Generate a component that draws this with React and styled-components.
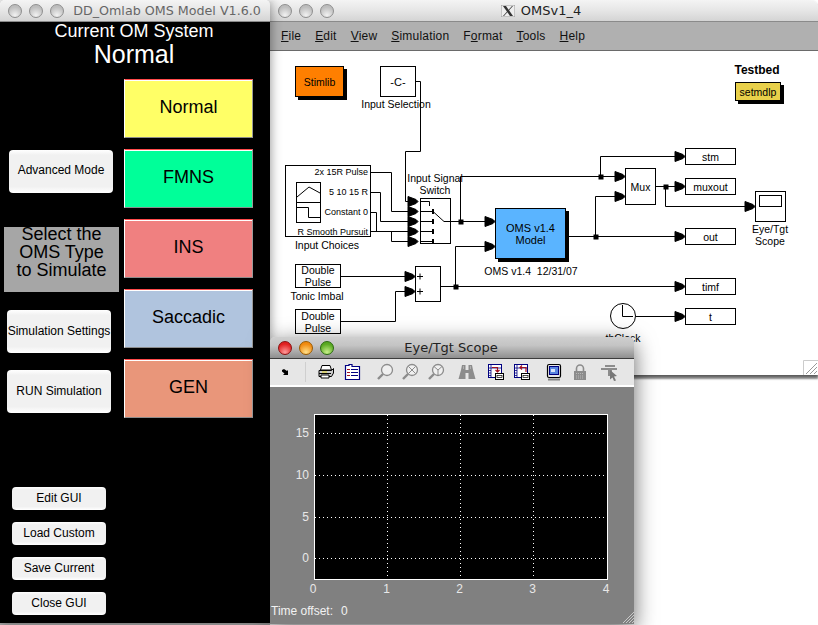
import React from "react";
import styled, { createGlobalStyle } from "styled-components";

const GlobalStyle = createGlobalStyle`
  html, body {
    margin: 0;
    padding: 0;
    background: #fff;
    font-family: "Liberation Sans", Arial, sans-serif;
  }
`;

const Desktop = styled.div`
  position: relative;
  width: 818px;
  height: 625px;
  overflow: hidden;
  background: #fff;
`;

const Window = styled.div`
  position: absolute;
  left: ${(p) => p.$x}px;
  top: ${(p) => p.$y}px;
  width: ${(p) => p.$w}px;
  height: ${(p) => p.$h}px;
  display: flex;
  flex-direction: column;
  box-shadow: ${(p) => p.$shadow};
  border-radius: ${(p) => p.$radius || "5px 5px 0 0"};
`;

const TitleBar = styled.div`
  height: 22px;
  flex: none;
  display: flex;
  align-items: center;
  padding-left: 8px;
  box-sizing: border-box;
  background: ${(p) =>
    p.$active
      ? "linear-gradient(#cfcfcf, #c4c4c4 40%, #8f8f8f)"
      : "linear-gradient(#f4f4f4, #e6e6e6 50%, #d4d4d4)"};
  border-bottom: 1px solid ${(p) => (p.$active ? "#3c3c3c" : "#8a8a8a")};
  border-radius: inherit;
`;

const Lights = styled.div`
  display: flex;
  gap: 7px;
  flex: none;
`;

const Light = styled.span`
  width: 14px;
  height: 14px;
  border-radius: 50%;
  box-sizing: border-box;
  border: 1px solid ${(p) => p.$edge};
  background: radial-gradient(circle at 50% 85%, ${(p) => p.$glow}, ${(p) => p.$base} 70%);
`;

const WindowTitle = styled.div`
  flex: 1;
  display: flex;
  justify-content: center;
  align-items: center;
  gap: 6px;
  padding-right: ${(p) => p.$pr || 0}px;
  font-family: "DejaVu Sans", sans-serif;
  font-size: ${(p) => p.$size || 13}px;
  color: ${(p) => p.$color || "#222"};
  white-space: nowrap;
`;

/* left GUI */
const GuiBody = styled.div`
  flex: 1;
  background: #000;
  display: flex;
  flex-direction: column;
`;

const Heading = styled.div`
  color: #fff;
  text-align: center;
  padding-right: 2px;
  font-size: ${(p) => p.$size}px;
  line-height: ${(p) => p.$lh}px;
  margin-top: ${(p) => p.$mt || 0}px;
`;

const GuiColumns = styled.div`
  display: flex;
  margin-top: 11px;
`;

const SideColumn = styled.div`
  width: 124px;
  display: flex;
  flex-direction: column;
  align-items: flex-start;
`;

const ModeColumn = styled.div`
  display: flex;
  flex-direction: column;
  gap: 11px;
`;

const ModeButton = styled.div`
  width: 129px;
  height: 59px;
  box-sizing: border-box;
  display: flex;
  align-items: center;
  justify-content: center;
  padding-bottom: 3px;
  background: ${(p) => p.$color};
  border-top: 1px solid #ff4a4a;
  border-left: 1px solid #fff;
  border-right: 1px solid #9a9a9a;
  border-bottom: 1px solid #8c8c8c;
  box-shadow: inset 0 1px 0 #fff;
  color: #000;
  font-size: 18px;
`;

const GuiButton = styled.div`
  width: ${(p) => p.$w}px;
  height: ${(p) => p.$h}px;
  margin-left: ${(p) => p.$ml}px;
  margin-top: ${(p) => p.$mt}px;
  flex: none;
  display: flex;
  align-items: center;
  justify-content: center;
  white-space: nowrap;
  padding-bottom: ${(p) => p.$pb || 1}px;
  box-sizing: border-box;
  border-radius: 4px;
  background: linear-gradient(#fff, #f1f1f1 12%, #f1f1f1 85%, #fff);
  color: #000;
  font-size: 12px;
`;

const SelectLabel = styled.div`
  width: 115px;
  height: 65px;
  margin: 34px 0 0 4px;
  flex: none;
  display: flow-root;
  background: #a6a6a6;
  color: #000;
  font-size: 18px;
  line-height: 18px;
  text-align: center;
`;

const SelectText = styled.div`
  margin-top: -2px;
  white-space: pre-line;
`;

/* model window */
const MenuBar = styled.div`
  height: 29px;
  flex: none;
  box-sizing: border-box;
  display: flex;
  align-items: center;
  gap: 14px;
  padding: 0 0 0 11px;
  background: #b0b0b0;
  border-bottom: 1px solid #6a6a6a;
  font-size: 12px;
  letter-spacing: 0.2px;
  color: #111;
`;

const Canvas = styled.div`
  position: relative;
  flex: 1;
  background: #fff;
  overflow: hidden;
`;

const Wires = styled.svg`
  position: absolute;
  left: 0;
  top: 0;
`;

// nodes are given in page coordinates, the canvas starts at 270,51
const Block = styled.div`
  position: absolute;
  left: ${(p) => p.$x - 270}px;
  top: ${(p) => p.$y - 51}px;
  width: ${(p) => p.$w}px;
  height: ${(p) => p.$h}px;
  box-sizing: border-box;
  display: flex;
  align-items: center;
  justify-content: center;
  text-align: center;
  background: ${(p) => p.$fill || "#fff"};
  border: 1px solid #000;
  box-shadow: ${(p) => (p.$shadow ? "3px 3px 0 #000" : "none")};
  color: #000;
  font-size: ${(p) => p.$size || 10.5}px;
  line-height: 12px;
  white-space: pre-line;
`;

const NodeLabel = styled.div`
  position: absolute;
  left: ${(p) => p.$cx - 270}px;
  top: ${(p) => p.$y - 51}px;
  transform: translateX(-50%);
  color: #000;
  font-size: ${(p) => p.$size || 10.5}px;
  line-height: 12px;
  font-weight: ${(p) => (p.$bold ? "bold" : "normal")};
  text-align: center;
  white-space: pre;
`;

const PortList = styled.div`
  position: absolute;
  right: 2px;
  top: -4px;
  display: flex;
  flex-direction: column;
  align-items: flex-end;
  font-size: 9px;
  line-height: 20px;
  white-space: nowrap;
`;

const MiniGraph = styled.svg`
  position: absolute;
  left: 10px;
  top: 16px;
`;

const Grip = styled.svg`
  position: absolute;
  right: ${(p) => p.$r}px;
  bottom: ${(p) => p.$b}px;
`;

/* scope window */
const Toolbar = styled.div`
  height: 28px;
  flex: none;
  box-sizing: border-box;
  display: flex;
  align-items: center;
  padding-left: 5px;
  background: #e6e6e6;
  border-bottom: 2px solid #fff;
`;

const ToolSlot = styled.div`
  width: 20px;
  height: 20px;
  flex: none;
  margin-left: ${(p) => p.$ml || 0}px;
  display: flex;
`;

const ToolSeparator = styled.div`
  width: 1px;
  height: 20px;
  flex: none;
  margin: 0 10px;
  background: #cfcfcf;
`;

const ScopeBody = styled.div`
  position: relative;
  flex: 1;
  display: flex;
  flex-direction: column;
  background: #808080;
`;

const Status = styled.div`
  height: 20px;
  padding: 4px 0 0 1px;
  display: flex;
  gap: 8px;
  color: #f2f2f2;
  font-size: 12px;
  line-height: 15px;
`;

const greyLight = { $edge: "#8e8e8e", $glow: "#f2f2f2", $base: "#bdbdbd" };

function GreyLights() {
  return (
    <Lights>
      <Light {...greyLight} />
      <Light {...greyLight} />
      <Light {...greyLight} />
    </Lights>
  );
}

function Arrow({ x, y }) {
  return <polygon points={`${x - 10},${y - 5} ${x - 2},${y - 2} ${x},${y} ${x - 2},${y + 2} ${x - 10},${y + 5}`} fill="#000" />;
}

function Junction({ x, y }) {
  return <rect x={x - 1.5} y={y - 1.5} width="4" height="4" fill="#000" />;
}

const wirePaths = [
  "M416 81.5H420.5V151.5H405.5V201.5H410",
  "M371 172.5H391.5V211.5H410",
  "M371 192.5H380.5V221.5H410",
  "M371 212.5H376.5V231.5H410",
  "M371 231.5H391.5V241.5H410",
  "M451 221.5H487",
  "M460.5 221.5V176.5H617",
  "M600.5 176.5V156.5H677",
  "M656 186.5H677",
  "M665.5 186.5V206.5H747",
  "M569 236.5H677",
  "M595.5 236.5V196.5H617",
  "M341 276.5H407",
  "M341 321.5H395.5V291.5H407",
  "M441 286.5H677",
  "M455.5 286.5V246.5H487",
  "M636 316.5H677",
];

const arrows = [
  [418, 201.5], [418, 211.5], [418, 221.5], [418, 231.5], [418, 241.5],
  [495, 221.5], [495, 246.5],
  [625, 176.5], [625, 196.5],
  [685, 156.5], [685, 186.5], [685, 236.5], [685, 286.5], [685, 316.5],
  [755, 206.5],
  [415, 276.5], [415, 291.5],
];

const junctions = [
  [460.5, 221.5], [600.5, 176.5], [665.5, 186.5], [595.5, 236.5], [455.5, 286.5],
];

function ModelWires() {
  return (
    <Wires width="548" height="324" viewBox="270 51 548 324" fill="none" stroke="#000">
      {wirePaths.map((d) => (
        <path key={d} d={d} />
      ))}
      {arrows.map(([x, y]) => (
        <Arrow key={`${x}-${y}`} x={x} y={y} />
      ))}
      {junctions.map(([x, y]) => (
        <Junction key={`${x}-${y}`} x={x} y={y} />
      ))}
      {/* switch block inside */}
      <path d="M420 201.5H429.5V206" />
      <path d="M420 211.5H433M420 221.5H433M420 231.5H433M420 241.5H433" />
      <path d="M433 211.5L444 221.5H451" />
      <g fill="#000" stroke="none">
        <rect x="432" y="209" width="2" height="5" />
        <rect x="432" y="219" width="2" height="5" />
        <rect x="432" y="229" width="2" height="5" />
        <rect x="432" y="239" width="2" height="5" />
      </g>
      {/* sum signs */}
      <path d="M417 276.5H423M420 273.5V279.5M417 291.5H423M420 288.5V294.5" />
      {/* clock */}
      <circle cx="623" cy="316" r="12.5" fill="#fff" />
      <path d="M622.5 305V316.5H633" />
      {/* scope */}
      <rect x="755.5" y="191.5" width="30" height="30" fill="#fff" />
      <rect x="759.5" y="195.5" width="22" height="11" fill="#fff" />
    </Wires>
  );
}

function ChoicesGraph() {
  return (
    <MiniGraph width="26" height="42" viewBox="0 0 26 42" fill="none" stroke="#000">
      <rect x="0.5" y="0.5" width="24" height="40" fill="#fff" />
      <path d="M0.5 20.5H24.5" />
      <path d="M1 15L13 5L24 11" />
      <path d="M1 25.5H12.5V35.5H24" />
    </MiniGraph>
  );
}

const xTicks = [
  { x: 314, label: "0" },
  { x: 387.5, label: "1" },
  { x: 460.5, label: "2" },
  { x: 533.5, label: "3" },
  { x: 607, label: "4" },
];
const yTicks = [
  { y: 558.5, label: "0" },
  { y: 517.5, label: "5" },
  { y: 475.5, label: "10" },
  { y: 433.5, label: "15" },
];

function ScopeChart() {
  return (
    <svg width="364" height="213" viewBox="270 387 364 213" style={{ display: "block" }}>
      <rect x="314.5" y="414.5" width="293" height="165" fill="#000" stroke="#fff" />
      {xTicks.slice(1, 4).map((t) => (
        <path key={t.x} d={`M${t.x} 415V579`} stroke="#fff" strokeDasharray="1 3" />
      ))}
      {yTicks.map((t) => (
        <path key={t.y} d={`M315 ${t.y}H607`} stroke="#fff" strokeDasharray="1 3" />
      ))}
      <g fill="#e8e8e8" fontFamily="Liberation Sans, sans-serif" fontSize="12">
        {xTicks.map((t) => (
          <text key={t.x} x={t.x - 1} y="593" textAnchor="middle">
            {t.label}
          </text>
        ))}
        {yTicks.map((t) => (
          <text key={t.y} x="309" y={t.y + 3.5} textAnchor="end">
            {t.label}
          </text>
        ))}
      </g>
    </svg>
  );
}

const GREY = "#8c8c8c";
const NAVY = "#000080";

function Icon({ children }) {
  return (
    <svg width="20" height="20" viewBox="0 0 20 20" fill="none">
      {children}
    </svg>
  );
}

function Magnifier({ children }) {
  return (
    <Icon>
      <circle cx="12" cy="8" r="5.5" fill="#f0f0f0" stroke={GREY} strokeWidth="1.3" />
      <path d="M8 12L3 17" stroke={GREY} strokeWidth="2.4" />
      {children}
    </Icon>
  );
}

function DocIcon({ arrow }) {
  return (
    <Icon>
      <rect x="2.5" y="2.5" width="13" height="13" fill="#fff" stroke={NAVY} />
      <path d="M3 6H15M5 3V15M3 8.5H5M3 11H5M3 13.5H5" stroke={NAVY} strokeWidth="0.8" />
      <path d={arrow} stroke="#a01020" strokeWidth="1.2" />
      <rect x="9.5" y="11.5" width="8" height="6" fill="#fff" stroke="#000" />
      <rect x="11" y="13.5" width="5" height="2" fill="#fff" stroke="#000" strokeWidth="0.7" />
    </Icon>
  );
}

const tools = [
  {
    ml: 0,
    icon: (
      <Icon>
        <path d="M7 8L9 7L12 9L13 8V13H8L9.5 11.5L7 9.5Z" fill="#000" />
      </Icon>
    ),
    sep: true,
  },
  {
    ml: 0,
    icon: (
      <Icon>
        <path d="M6 3.5H14L15.5 8H4.5Z" fill="#fff" stroke="#000" />
        <path d="M3 8.5H15.5L17.5 6.5V11L15.5 14.5H3Z" fill="#ccc" stroke="#000" />
        <path d="M3 11.5H15" stroke="#000" />
        <path d="M5 13H13V16H5Z" fill="#fff" stroke="#000" />
        <rect x="6" y="9.5" width="5" height="1" fill="#e0d020" />
      </Icon>
    ),
  },
  {
    ml: 6,
    icon: (
      <Icon>
        <path d="M3.5 3.5H7V2.5H10V4.5H17.5V17.5H3.5Z" fill="#fff" stroke={NAVY} strokeWidth="1.2" />
        <path d="M5 7.5H8M5 10.5H8M5 13.5H8" stroke="#a01020" strokeWidth="1.2" />
        <path d="M9 7.5H16M9 10.5H16M9 13.5H16" stroke={NAVY} strokeWidth="1.2" />
      </Icon>
    ),
  },
  { ml: 13, icon: <Magnifier /> },
  {
    ml: 5,
    icon: (
      <Magnifier>
        <path d="M8.5 4.5L15.5 11.5M15.5 4.5L8.5 11.5" stroke={GREY} />
      </Magnifier>
    ),
  },
  {
    ml: 6,
    icon: (
      <Magnifier>
        <path d="M12 8V13M12 8L8 4.5M12 8L16 4.5" stroke={GREY} />
      </Magnifier>
    ),
  },
  {
    ml: 11,
    icon: (
      <Icon>
        <path d="M5 3H8.5V8H11.5V3H15L16 8L18.5 17H11.5V11H8.5V17H1.5L4 8Z" fill={GREY} />
        <path d="M10 11V17" stroke="#e6e6e6" strokeWidth="1" />
        <path d="M6.5 4V7M13.5 4V7" stroke="#b0b0b0" />
      </Icon>
    ),
  },
  { ml: 9, icon: <DocIcon arrow="M6 5.5H11.5V10M9.5 8L11.5 10L13.5 8" /> },
  { ml: 6, icon: <DocIcon arrow="M14 10V5.5H8M10 3.5L8 5.5L10 7.5" /> },
  {
    ml: 12,
    icon: (
      <Icon>
        <rect x="3.5" y="2.5" width="13" height="13" rx="1.5" fill="#e8e8e8" stroke="#000" strokeWidth="1.2" />
        <rect x="5.5" y="4.5" width="9" height="8" fill="#5a86e0" stroke={NAVY} />
        <rect x="7" y="7" width="4" height="3" fill="#d8e4f8" />
        <path d="M4.5 17.5H15.5" stroke="#222" strokeWidth="2" strokeDasharray="1 1" />
      </Icon>
    ),
  },
  {
    ml: 6,
    icon: (
      <Icon>
        <path d="M6.5 9V6.5A3.5 3.5 0 0 1 13.5 6.5V9" stroke={GREY} strokeWidth="1.6" />
        <rect x="4" y="9" width="12" height="9" fill={GREY} />
        <path d="M6 11.5H14M6 14H14M6 16H14" stroke="#b8b8b8" strokeDasharray="1 1" />
      </Icon>
    ),
  },
  {
    ml: 9,
    icon: (
      <Icon>
        <path d="M2 6H18V8H13V10H11V14H9V8H2Z" fill={GREY} />
        <path d="M6 3H16V5H6Z" fill={GREY} />
        <path d="M11 8L18 14L15 14.5L17 18.5L15 19L13.5 15.5L11 17.5Z" fill="#777" />
      </Icon>
    ),
  },
];

const modes = [
  { name: "Normal", color: "#ffff66" },
  { name: "FMNS", color: "#00ff99" },
  { name: "INS", color: "#f08080" },
  { name: "Saccadic", color: "#b0c4de" },
  { name: "GEN", color: "#e9967a" },
];

const menus = [
  ["", "F", "ile"],
  ["", "E", "dit"],
  ["", "V", "iew"],
  ["", "S", "imulation"],
  ["F", "o", "rmat"],
  ["", "T", "ools"],
  ["", "H", "elp"],
];

function App() {
  return (
    <Desktop>
      <GlobalStyle />

      <Window $x={270} $y={0} $w={548} $h={375} $radius="5px 8px 0 0" $shadow="0 2px 3px #555, 0 4px 2px #999">
        <TitleBar>
          <GreyLights />
          <WindowTitle $pr={70} $size={13}>
            <svg width="14" height="12" viewBox="0 0 14 12">
              <rect width="14" height="12" fill="#eee" stroke="#999" />
              <path d="M2 1H5L12 11H9Z" fill="#333" />
              <path d="M11 1H12L3 11H2Z" fill="#333" />
            </svg>
            OMSv1_4
          </WindowTitle>
        </TitleBar>
        <MenuBar>
          {menus.map(([pre, key, rest]) => (
            <span key={key + rest}>
              {pre}
              <u>{key}</u>
              {rest}
            </span>
          ))}
        </MenuBar>
        <Canvas>
          <ModelWires />
          <Block $x={295} $y={66} $w={49} $h={31} $fill="#ff7f00" $shadow>Stimlib</Block>
          <Block $x={380} $y={66} $w={36} $h={31} $size={11}>-C-</Block>
          <NodeLabel $cx={396} $y={98}>Input Selection</NodeLabel>
          <NodeLabel $cx={757} $y={64} $size={12} $bold>Testbed</NodeLabel>
          <Block $x={735} $y={82} $w={46} $h={19} $fill="#e8d04a" $shadow>setmdlp</Block>

          <Block $x={285} $y={165} $w={86} $h={72}>
            <ChoicesGraph />
            <PortList>
              <span>2x 15R Pulse</span>
              <span>5 10 15 R</span>
              <span>Constant 0</span>
              <span>R Smooth Pursuit</span>
            </PortList>
          </Block>
          <NodeLabel $cx={327} $y={239}>Input Choices</NodeLabel>
          <NodeLabel $cx={435} $y={172}>{"Input Signal\nSwitch"}</NodeLabel>
          <Block $x={420} $y={198} $w={31} $h={46} $fill="transparent" />

          <Block $x={495} $y={208} $w={71} $h={51} $fill="#5ab4ff" $size={11} $shadow>{"OMS v1.4\nModel"}</Block>
          <NodeLabel $cx={531} $y={265}>OMS v1.4  12/31/07</NodeLabel>

          <Block $x={295} $y={264} $w={46} $h={24}>{"Double\nPulse"}</Block>
          <NodeLabel $cx={317} $y={290}>Tonic Imbal</NodeLabel>
          <Block $x={295} $y={309} $w={46} $h={25}>{"Double\nPulse"}</Block>
          <Block $x={415} $y={266} $w={26} $h={36} $fill="transparent" />

          <Block $x={625} $y={168} $w={31} $h={37}>Mux</Block>
          <Block $x={685} $y={148} $w={51} $h={17}>stm</Block>
          <Block $x={685} $y={178} $w={51} $h={17}>muxout</Block>
          <Block $x={685} $y={228} $w={51} $h={17}>out</Block>
          <Block $x={685} $y={278} $w={51} $h={17}>timf</Block>
          <Block $x={685} $y={308} $w={51} $h={17}>t</Block>
          <NodeLabel $cx={770} $y={223}>{"Eye/Tgt\nScope"}</NodeLabel>
          <NodeLabel $cx={623} $y={332}>thClock</NodeLabel>

          <Grip $r={0} $b={0} width="15" height="15" viewBox="0 0 15 15" fill="none">
            <path d="M0.5 15V0.5H15" stroke="#ccc" />
            <path d="M3 14L14 3M7 14L14 7M11 14L14 11" stroke="#999" />
          </Grip>
        </Canvas>
      </Window>

      <Window $x={0} $y={0} $w={270} $h={623} $shadow="0 0 12px rgba(0,0,0,0.45), 0 2px 0 #aaa">
        <TitleBar>
          <GreyLights />
          <WindowTitle $color="#666" $size={12.7}>DD_Omlab OMS Model V1.6.0</WindowTitle>
        </TitleBar>
        <GuiBody>
          <Heading $size={18} $lh={18}>Current OM System</Heading>
          <Heading $size={25} $lh={27} $mt={1}>Normal</Heading>
          <GuiColumns>
            <SideColumn>
              <GuiButton $w={104} $h={43} $ml={9} $mt={71} $pb={3}>Advanced Mode</GuiButton>
              <SelectLabel>
                <SelectText>{"Select the\nOMS Type\nto Simulate"}</SelectText>
              </SelectLabel>
              <GuiButton $w={104} $h={43} $ml={7} $mt={18}>Simulation Settings</GuiButton>
              <GuiButton $w={104} $h={43} $ml={7} $mt={17}>RUN Simulation</GuiButton>
              <GuiButton $w={94} $h={23} $ml={12} $mt={74}>Edit GUI</GuiButton>
              <GuiButton $w={94} $h={23} $ml={12} $mt={12}>Load Custom</GuiButton>
              <GuiButton $w={94} $h={23} $ml={12} $mt={12}>Save Current</GuiButton>
              <GuiButton $w={94} $h={23} $ml={12} $mt={12}>Close GUI</GuiButton>
            </SideColumn>
            <ModeColumn>
              {modes.map((m) => (
                <ModeButton key={m.name} $color={m.color}>{m.name}</ModeButton>
              ))}
            </ModeColumn>
          </GuiColumns>
        </GuiBody>
      </Window>

      <Window $x={270} $y={337} $w={364} $h={287} $shadow="0 6px 22px rgba(0,0,0,0.6)">
        <TitleBar $active>
          <Lights>
            <Light $edge="#8a1010" $glow="#ff9a9a" $base="#e02020" />
            <Light $edge="#9a5a00" $glow="#ffe08a" $base="#f08a10" />
            <Light $edge="#2a6a10" $glow="#c8f08a" $base="#58a820" />
          </Lights>
          <WindowTitle $pr={66} $size={13}>Eye/Tgt Scope</WindowTitle>
        </TitleBar>
        <Toolbar>
          {tools.map((t, i) => (
            <React.Fragment key={i}>
              <ToolSlot $ml={t.ml}>{t.icon}</ToolSlot>
              {t.sep && <ToolSeparator />}
            </React.Fragment>
          ))}
        </Toolbar>
        <ScopeBody>
          <ScopeChart />
          <Status>
            <span>Time offset:</span>
            <span>0</span>
          </Status>
          <Grip $r={0} $b={1} width="12" height="12" viewBox="0 0 12 12" fill="none">
            <path d="M1 12L12 1M4 12L12 4M7 12L12 7M10 12L12 10" stroke="#c8c8c8" />
          </Grip>
        </ScopeBody>
      </Window>
    </Desktop>
  );
}

export default App;
